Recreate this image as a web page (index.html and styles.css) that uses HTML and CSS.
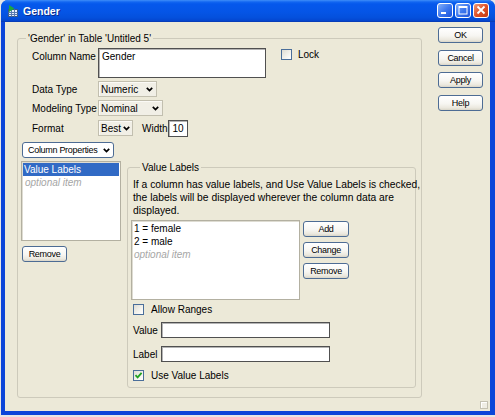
FILE: index.html
```html
<!DOCTYPE html>
<html>
<head>
<meta charset="utf-8">
<title>Gender</title>
<link rel="stylesheet" href="styles.css">
</head>
<body>
<div class="window">
  <div class="titlebar">
    <svg class="title-icon" width="11" height="12" viewBox="0 0 11 12">
      <rect x="0.5" y="4.5" width="9" height="7" fill="#e8eefc" stroke="#3a5a8a"/>
      <path d="M0.5 7.5H9.5M0.5 9.5H9.5M3.5 4.5V11.5M6.5 4.5V11.5" stroke="#5b7cb0" stroke-width="1"/>
      <path d="M1 0 L1 7 L6.5 3.5 Z" fill="#1fa83a"/>
    </svg>
    <span class="title-text">Gender</span>
    <div class="controls">
      <svg width="16" height="15" viewBox="0 0 16 15">
        <defs>
          <linearGradient id="gb" x1="0" y1="0" x2="1" y2="1">
            <stop offset="0" stop-color="#8ab4fa"/>
            <stop offset="0.5" stop-color="#3d78ef"/>
            <stop offset="1" stop-color="#1a4fd8"/>
          </linearGradient>
          <linearGradient id="gr" x1="0" y1="0" x2="1" y2="1">
            <stop offset="0" stop-color="#f0a080"/>
            <stop offset="0.5" stop-color="#e0522a"/>
            <stop offset="1" stop-color="#c3380f"/>
          </linearGradient>
        </defs>
        <rect x="0.5" y="0.5" width="15" height="14" rx="2.5" fill="url(#gb)" stroke="#fff"/>
        <rect x="4" y="9" width="5" height="2" fill="#fff"/>
      </svg>
      <svg width="16" height="15" viewBox="0 0 16 15">
        <rect x="0.5" y="0.5" width="15" height="14" rx="2.5" fill="url(#gb)" stroke="#fff"/>
        <rect x="4" y="3.5" width="8" height="7.5" fill="none" stroke="#fff"/>
        <rect x="4" y="3" width="8" height="2" fill="#fff"/>
      </svg>
      <svg width="16" height="15" viewBox="0 0 16 15">
        <rect x="0.5" y="0.5" width="15" height="14" rx="2.5" fill="url(#gr)" stroke="#fff"/>
        <path d="M4.5 3.5 L11.5 10.5 M11.5 3.5 L4.5 10.5" stroke="#fff" stroke-width="1.8"/>
      </svg>
    </div>
  </div>
  <div class="client">
    <fieldset class="group main-group">
      <legend>'Gender' in Table 'Untitled 5'</legend>
      <div class="field-rows">
        <div class="row row-name">
          <span class="label">Column Name</span>
          <div class="textbox name-box">Gender</div>
          <div class="check lock">
            <span class="checkbox"></span>
            <span>Lock</span>
          </div>
        </div>
        <div class="row row-gap3">
          <span class="label">Data Type</span>
          <div class="combo w-data"><span>Numeric</span>
            <svg class="chev" width="7" height="5" viewBox="0 0 7 5"><path d="M0.8 0.8 L3.5 3.6 L6.2 0.8" stroke="#000" stroke-width="1.7" fill="none"/></svg>
          </div>
        </div>
        <div class="row row-gap3">
          <span class="label">Modeling Type</span>
          <div class="combo w-model"><span>Nominal</span>
            <svg class="chev" width="7" height="5" viewBox="0 0 7 5"><path d="M0.8 0.8 L3.5 3.6 L6.2 0.8" stroke="#000" stroke-width="1.7" fill="none"/></svg>
          </div>
        </div>
        <div class="row row-gap4">
          <span class="label">Format</span>
          <div class="combo w-format"><span>Best</span>
            <svg class="chev" width="7" height="5" viewBox="0 0 7 5"><path d="M0.8 0.8 L3.5 3.6 L6.2 0.8" stroke="#000" stroke-width="1.7" fill="none"/></svg>
          </div>
          <span class="width-label">Width</span>
          <div class="textbox width-box">10</div>
        </div>
      </div>
      <div class="btn dropbtn">
        <span>Column Properties</span>
        <svg class="chev" width="7" height="5" viewBox="0 0 7 5"><path d="M0.8 0.8 L3.5 3.6 L6.2 0.8" stroke="#000" stroke-width="1.7" fill="none"/></svg>
      </div>
      <div class="lower">
        <div class="left-col">
          <div class="listbox list-left">
            <div class="item selected">Value Labels</div>
            <div class="item optional">optional item</div>
          </div>
          <div class="btn remove-left">Remove</div>
        </div>
        <fieldset class="group value-group">
          <legend>Value Labels</legend>
          <div class="desc">If a column has value labels, and Use Value Labels is checked,<br>the labels will be displayed wherever the column data are<br>displayed.</div>
          <div class="vl-row">
            <div class="listbox list-values">
              <div class="item">1 = female</div>
              <div class="item">2 = male</div>
              <div class="item optional">optional item</div>
            </div>
            <div class="vl-buttons">
              <div class="btn vbtn">Add</div>
              <div class="btn vbtn">Change</div>
              <div class="btn vbtn">Remove</div>
            </div>
          </div>
          <div class="check allow">
            <span class="checkbox"></span>
            <span>Allow Ranges</span>
          </div>
          <div class="input-row value-row">
            <span class="small-label">Value</span>
            <div class="textbox entry"></div>
          </div>
          <div class="input-row label-row">
            <span class="small-label">Label</span>
            <div class="textbox entry"></div>
          </div>
          <div class="check usevl">
            <span class="checkbox checked">
              <svg width="9" height="9" viewBox="0 0 9 9"><path d="M1.5 4.2 L3.6 6.4 L7.6 1.8" stroke="#21a121" stroke-width="1.8" fill="none"/></svg>
            </span>
            <span>Use Value Labels</span>
          </div>
        </fieldset>
      </div>
    </fieldset>
    <div class="side">
      <div class="btn sbtn">OK</div>
      <div class="btn sbtn">Cancel</div>
      <div class="btn sbtn">Apply</div>
      <div class="btn sbtn">Help</div>
      <div class="grip"></div>
    </div>
  </div>
</div>
</body>
</html>
```

FILE: styles.css
```css
* { box-sizing: border-box; }

body {
  margin: 0;
  width: 495px;
  height: 417px;
  overflow: hidden;
  background: #e6e6e6;
  font-family: "Liberation Sans", Arial, sans-serif;
  font-size: 10px;
  color: #000;
}

.window {
  margin-left: 1px;
  width: 494px;
  height: 415px;
  background: #0b45d9;
  border-radius: 7px 7px 0 0;
  display: flex;
  flex-direction: column;
}

.titlebar {
  height: 22px;
  flex-shrink: 0;
  display: flex;
  align-items: center;
  padding: 0 6px 0 7px;
  border-radius: 7px 7px 0 0;
  background: linear-gradient(to bottom, #3f8ef8 0, #1266f1 2px, #0558ec 4px, #0555e6 55%, #0450dc 80%, #0445ce 95%, #0a36a8 100%);
}

.title-icon { margin-right: 4px; margin-top: -1px; }

.title-text {
  color: #fff;
  font-weight: bold;
  font-size: 10.5px;
  text-shadow: 1px 1px 0 #0b2b8c;
}

.controls {
  margin-left: auto;
  align-self: flex-start;
  margin-top: 3px;
  display: flex;
  gap: 2px;
}

.client {
  flex: 1;
  margin: 0 5px 4px 4px;
  background: #ece9d8;
  display: flex;
}

.group {
  margin: 0;
  padding: 0;
  border: 1px solid #cdcabb;
  border-radius: 3px;
  min-width: 0;
}

.group legend {
  margin-left: 8px;
  padding: 0 2px;
  line-height: 13px;
  height: 13px;
  font-size: 10px;
}

.main-group {
  margin: 10px 0 0 12px;
  width: 405px;
  height: 366px;
  flex-shrink: 0;
  padding-top: 3px;
}

.field-rows { margin-left: 14px; }

.row {
  display: flex;
  align-items: center;
  height: 16px;
}

.row-gap3 { margin-top: 3px; }
.row-gap4 { margin-top: 4px; }

.row-name {
  height: 30px;
  align-items: flex-start;
}

.label {
  width: 66px;
  flex-shrink: 0;
  line-height: 13px;
}

.row-name .label { padding-top: 2px; }

.textbox {
  background: #fff;
  border: 1px solid #505050;
  box-shadow: inset 1px 1px 0 #b4b4b4;
  line-height: 13px;
}

.name-box {
  width: 168px;
  height: 30px;
  padding: 1px 3px;
}

.check {
  display: flex;
  align-items: center;
  gap: 6px;
  line-height: 13px;
}

.lock { margin-left: 15px; }

.checkbox {
  width: 11px;
  height: 11px;
  flex-shrink: 0;
  border: 1px solid #4a6e9a;
  background: linear-gradient(135deg, #dedcd3 0, #f4f3ee 60%, #ffffff 100%);
  display: flex;
  align-items: center;
  justify-content: center;
}

.combo {
  height: 16px;
  display: flex;
  align-items: center;
  justify-content: space-between;
  padding: 0 3px 0 2px;
  border: 1px solid #c2bfaf;
  background: #f1efe6;
  box-shadow: inset 1px 1px 0 #fbfaf6;
}

.w-data { width: 59px; }
.w-model { width: 65px; }
.w-format { width: 35px; padding-right: 2px; }

.width-label {
  margin-left: 9px;
  width: 26px;
  flex-shrink: 0;
  white-space: nowrap;
}

.width-box {
  width: 20px;
  height: 17px;
  text-align: center;
  line-height: 15px;
}

.btn {
  height: 16px;
  display: flex;
  align-items: center;
  justify-content: center;
  border: 1px solid #4d6c94;
  border-radius: 3px;
  background: linear-gradient(to bottom, #ffffff 0, #f7f6f2 55%, #ebe8de 85%, #d9d5c8 100%);
  font-size: 9px;
  letter-spacing: -0.3px;
  white-space: nowrap;
}

.dropbtn {
  margin: 6px 0 0 4px;
  width: 92px;
  justify-content: space-between;
  padding: 0 3px 0 5px;
  background: #fff;
}

.lower {
  display: flex;
  align-items: flex-start;
  margin: 3px 0 0 3px;
}

.left-col { width: 100px; flex-shrink: 0; }

.listbox {
  background: #fff;
  border: 1px solid #b3b0a1;
  box-shadow: inset 1px 1px 0 #dedcd2;
}

.item {
  line-height: 13px;
  padding-left: 2px;
  white-space: nowrap;
}

.item.selected {
  background: #316ac5;
  color: #fff;
  padding-left: 1px;
}

.item.optional {
  color: #a6a6a6;
  font-style: italic;
}

.list-left {
  height: 80px;
  padding: 1px;
}

.remove-left {
  margin: 5px 0 0 1px;
  width: 45px;
}

.value-group {
  margin-left: 6px;
  width: 289px;
  height: 227px;
  flex-shrink: 0;
  padding: 4px 0 0 5px;
}

.value-group legend { margin-left: 7px; }

.desc {
  font-size: 10.3px;
  line-height: 13px;
  white-space: nowrap;
}

.vl-row {
  display: flex;
  align-items: flex-start;
  margin: 3px 0 0 -2px;
}

.list-values {
  width: 169px;
  height: 80px;
  padding-top: 1px;
}

.vl-buttons {
  display: flex;
  flex-direction: column;
  gap: 5px;
  margin: 1px 0 0 3px;
}

.vbtn { width: 46px; }

.allow { margin-top: 3px; gap: 7px; }

.input-row {
  display: flex;
  align-items: center;
  height: 16px;
}

.value-row { margin-top: 6px; }
.label-row { margin-top: 8px; }

.small-label { width: 28px; flex-shrink: 0; }

.entry {
  width: 169px;
  height: 16px;
}

.usevl { margin-top: 7px; gap: 7px; }

.side {
  flex: 1;
  margin-left: 16px;
  padding: 5px 2px 2px 0;
  display: flex;
  flex-direction: column;
  gap: 6.5px;
}

.sbtn { width: 45px; }

.grip {
  margin-top: auto;
  align-self: flex-end;
  width: 8px;
  height: 8px;
  border: 1px solid #c4c1b2;
  box-shadow: inset 1px 1px 0 #fff;
  background: #efede4;
}
```
